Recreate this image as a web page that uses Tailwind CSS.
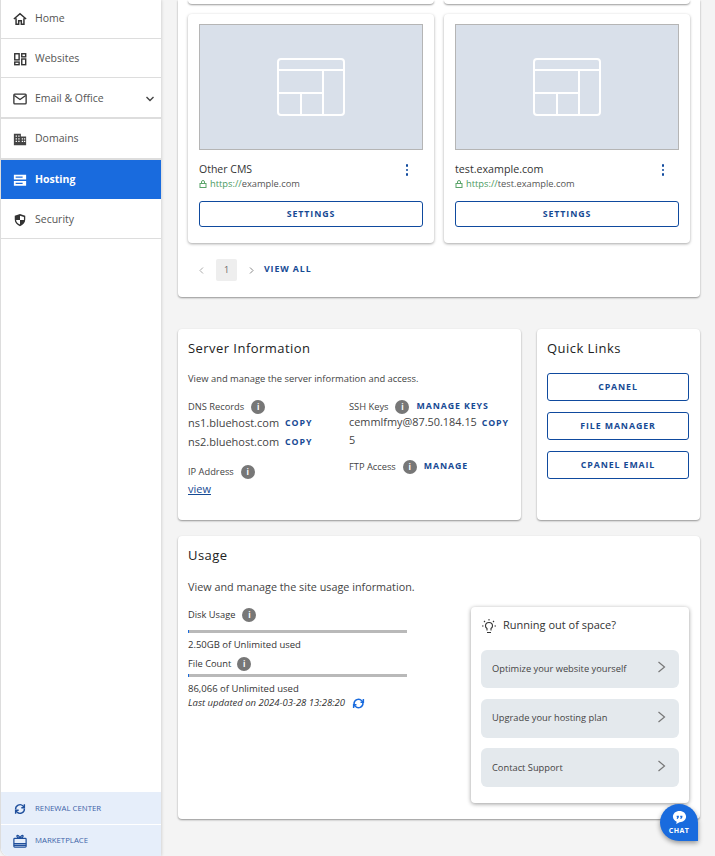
<!DOCTYPE html>
<html lang="en">

<head>
    <meta charset="UTF-8">
    <meta name="viewport" content="width=device-width, initial-scale=1.0">
    <title>Hosting</title>
    <script src="https://cdn.jsdelivr.net/npm/@tailwindcss/browser@4"></script>
</head>

<body class="bg-[#f4f4f4] font-['Open_Sans',sans-serif] text-[#333]">
    <div class="relative flex h-[856px] w-[715px] overflow-hidden">
        <!-- sidebar -->
        <aside class="flex h-full w-[161px] shrink-0 flex-col rounded-bl-lg border-l border-[#ddd] bg-white shadow-[1px_0_3px_rgba(0,0,0,0.12)]">
            <nav class="flex flex-col text-[10.500px] text-[#555]">
                <a class="flex h-[39px] items-center gap-2 border-b border-[#ddd] pl-3">
                    <svg class="size-[14px]" viewBox="0 0 16 16" fill="none" stroke="#333" stroke-width="1.700"><path d="M1 8l7-6 7 6M3.500 7v7h3v-4h3v4h3V7"/></svg>
                    <span>Home</span>
                </a>
                <a class="flex h-[39px] items-center gap-2 border-b border-[#ddd] pt-[2px] pl-3">
                    <svg class="size-[14px]" viewBox="0 0 16 16" fill="none" stroke="#333" stroke-width="1.600"><rect x="2" y="2" width="5" height="7"/><rect x="10" y="2" width="4.500" height="3.500"/><rect x="2" y="11.500" width="5" height="3"/><rect x="10" y="8" width="4.500" height="6.500"/></svg>
                    <span>Websites</span>
                </a>
                <a class="flex h-[41px] items-center gap-2 border-b-2 border-[#ddd] pt-[2px] pl-3">
                    <svg class="size-[14px]" viewBox="0 0 16 16" fill="none" stroke="#333" stroke-width="1.500"><rect x="1" y="2.500" width="14" height="11" rx="1"/><path d="M1.500 4l6.500 4.500L14.500 4"/></svg>
                    <span>Email &amp; Office</span>
                    <svg class="ml-auto mr-[6px] size-[10px]" viewBox="0 0 10 10" fill="none" stroke="#444" stroke-width="1.400"><path d="M1.500 3l3.500 3.500L8.500 3"/></svg>
                </a>
                <a class="flex h-[41px] items-center gap-2 border-b-2 border-[#ddd] pl-3">
                    <svg class="size-[14px]" viewBox="0 0 16 16"><path fill="#444" d="M1 2h8v3h6v10H1z"/><path fill="#fff" d="M3 4h1.500v1.500H3zM6 4h1.500v1.500H6zM3 7h1.500v1.500H3zM6 7h1.500v1.500H6zM3 10h1.500v1.500H3zM6 10h1.500v1.500H6zM10 7h1.500v1.500H10zM12.500 7H14v1.500h-1.500zM10 10h1.500v1.500H10zM12.500 10H14v1.500h-1.500z"/></svg>
                    <span>Domains</span>
                </a>
                <a class="flex h-[39px] items-center gap-2 bg-[#196bde] pl-3 font-bold text-white">
                    <svg class="size-[14px]" viewBox="0 0 16 16"><path fill="#fff" fill-rule="evenodd" d="M1 2h14v5.500H1zM1 9h14v5.500H1zM3 4v1.500h8V4zM3 11v1.500h8V11z"/></svg>
                    <span>Hosting</span>
                </a>
                <a class="flex h-[40px] items-center gap-2 border-b border-[#ddd] pt-[2px] pl-3">
                    <svg class="size-[14px]" viewBox="0 0 16 16"><path fill="#333" fill-rule="evenodd" d="M8 1l6 2.200v4.300c0 3.500-2.500 6.200-6 7.500-3.500-1.300-6-4-6-7.500V3.200zM8 3v5H3.500c.3 2.500 2 4.200 4.500 5.200V8h4.500V4.500z"/></svg>
                    <span>Security</span>
                </a>
            </nav>
            <div class="mt-auto flex flex-col text-[7.800px] text-[#3d63a8]">
                <a class="flex h-[33px] items-center gap-2 border-b border-white bg-[#e6eefa] pt-[2px] pl-3">
                    <svg class="size-[14px]" viewBox="0 0 16 16" fill="none" stroke="#1f4f9c" stroke-width="1.600"><path d="M3 8.500a5 5 0 0 1 8.500-4L13 6M13 7.500a5 5 0 0 1-8.500 4L3 10"/><path d="M13 2.500V6.500H9.500M3 13.500V9.500h3.500"/></svg>
                    <span>RENEWAL CENTER</span>
                </a>
                <a class="flex h-[31px] items-center gap-2 rounded-bl-lg bg-[#e6eefa] pl-3">
                    <svg class="size-[14px]" viewBox="0 0 16 16" fill="none" stroke="#1f4f9c" stroke-width="1.400"><rect x="1" y="5" width="14" height="10" rx="1"/><path d="M1 11h14M1 13h14M8 5C6 4.500 4 3.500 4.500 2S7.500 2.500 8 5c.5-2.500 3-4.500 3.500-3S10 4.500 8 5z"/></svg>
                    <span>MARKETPLACE</span>
                </a>
            </div>
        </aside>

        <!-- content -->
        <main class="flex min-w-0 flex-1 flex-col pl-[17px] pr-[15px]">
            <section class="h-[297px] rounded-b bg-white px-[10px] shadow-[0_1px_2px_rgba(0,0,0,0.4)]">
                <div class="grid grid-cols-2 gap-x-[10px]">
                    <div class="h-[4px] rounded-b bg-white shadow-[0_1px_2px_rgba(0,0,0,0.4)]"></div>
                    <div class="h-[4px] rounded-b bg-white shadow-[0_1px_2px_rgba(0,0,0,0.4)]"></div>
                </div>
                <div class="mt-[10px] grid grid-cols-2 gap-x-[10px]">
                    <div class="h-[229px] rounded bg-white px-[11px] pt-[10px] shadow-[0_1px_3px_rgba(0,0,0,0.35)]">
                        <div class="flex h-[126px] items-center justify-center border border-[#b5b5b5] bg-[#d9e0ea]">
                            <svg class="h-[58px] w-[68px]" viewBox="0 0 68 58" fill="none" stroke="#fff" stroke-width="2"><rect x="1" y="1" width="66" height="56" rx="3"/><path d="M1 12h66M46 12v45M1 35h45M24 35v22"/></svg>
                        </div>
                        <div class="mt-[12px] flex items-start justify-between">
                            <div>
                                <div class="text-[10.500px] leading-[15px] text-[#333]">Other CMS</div>
                                <div class="flex items-center gap-[3px] text-[9.300px] leading-[14px] text-[#555]">
                                    <svg class="size-[8px]" viewBox="0 0 8 8" fill="none" stroke="#5aa469"><rect x="1" y="3.500" width="6" height="4"/><path d="M2.500 3.500V2a1.500 1.500 0 0 1 3 0v1.500"/></svg>
                                    <span><span class="text-[#4a9a5f]">https://</span>example.com</span>
                                </div>
                            </div>
                            <div class="mr-[15px] mt-[2px] flex flex-col gap-[2px]">
                                <i class="size-[2.500px] rounded-full bg-[#0f4a9e]"></i><i class="size-[2.500px] rounded-full bg-[#0f4a9e]"></i><i class="size-[2.500px] rounded-full bg-[#0f4a9e]"></i>
                            </div>
                        </div>
                        <button class="mt-[10px] h-[26px] w-full rounded-[3px] border border-[#0f4a9e] pt-px text-[8.800px] font-bold tracking-[0.900px] text-[#164a94]">SETTINGS</button>
                    </div>
                    <div class="h-[229px] rounded bg-white px-[11px] pt-[10px] shadow-[0_1px_3px_rgba(0,0,0,0.35)]">
                        <div class="flex h-[126px] items-center justify-center border border-[#b5b5b5] bg-[#d9e0ea]">
                            <svg class="h-[58px] w-[68px]" viewBox="0 0 68 58" fill="none" stroke="#fff" stroke-width="2"><rect x="1" y="1" width="66" height="56" rx="3"/><path d="M1 12h66M46 12v45M1 35h45M24 35v22"/></svg>
                        </div>
                        <div class="mt-[12px] flex items-start justify-between">
                            <div>
                                <div class="text-[10.700px] leading-[15px] text-[#333]">test.example.com</div>
                                <div class="flex items-center gap-[3px] text-[9.300px] leading-[14px] text-[#555]">
                                    <svg class="size-[8px]" viewBox="0 0 8 8" fill="none" stroke="#5aa469"><rect x="1" y="3.500" width="6" height="4"/><path d="M2.500 3.500V2a1.500 1.500 0 0 1 3 0v1.500"/></svg>
                                    <span><span class="text-[#4a9a5f]">https://</span>test.example.com</span>
                                </div>
                            </div>
                            <div class="mr-[15px] mt-[2px] flex flex-col gap-[2px]">
                                <i class="size-[2.500px] rounded-full bg-[#0f4a9e]"></i><i class="size-[2.500px] rounded-full bg-[#0f4a9e]"></i><i class="size-[2.500px] rounded-full bg-[#0f4a9e]"></i>
                            </div>
                        </div>
                        <button class="mt-[10px] h-[26px] w-full rounded-[3px] border border-[#0f4a9e] pt-px text-[8.800px] font-bold tracking-[0.900px] text-[#164a94]">SETTINGS</button>
                    </div>
                </div>
                <div class="mt-[16px] flex h-[22px] items-center pl-[10px]">
                    <svg class="size-[7px]" viewBox="0 0 7 7" fill="none" stroke="#aaa"><path d="M5 .5L2 3.500l3 3"/></svg>
                    <span class="ml-[11px] flex h-[22px] w-[21px] items-center justify-center rounded-[2px] bg-[#eee] text-[9px] text-[#666]">1</span>
                    <svg class="ml-[11px] size-[7px]" viewBox="0 0 7 7" fill="none" stroke="#888"><path d="M2 .5l3 3-3 3"/></svg>
                    <span class="ml-[9px] text-[8.800px] font-bold tracking-[0.900px] text-[#164a94]">VIEW ALL</span>
                </div>
            </section>

            <div class="mt-[32px] flex h-[191px] gap-4">
                <section class="w-[343px] rounded bg-white px-[10px] pt-[10px] shadow-[0_1px_2px_rgba(0,0,0,0.4)]">
                    <h2 class="text-[13px] leading-[18px] font-medium tracking-[0.450px] text-[#222]">Server Information</h2>
                    <p class="mt-[15px] whitespace-nowrap text-[9.400px] leading-[13px] text-[#444]">View and manage the server information and access.</p>
                    <div class="mt-[14px] grid grid-cols-[161px_1fr]">
                        <div>
                            <div class="flex h-[16px] items-center gap-[7px] text-[9.300px] text-[#444]">DNS Records <i class="flex size-[14px] items-center justify-center rounded-full bg-[#777] text-[8px] font-bold not-italic text-white">i</i></div>
                            <div class="-mt-px flex h-[19px] items-center gap-[6px] text-[11px] text-[#444]">ns1.bluehost.com <b class="text-[8.800px] font-bold tracking-[0.900px] text-[#164a94]">COPY</b></div>
                            <div class="flex h-[19px] items-center gap-[6px] text-[11px] text-[#444]">ns2.bluehost.com <b class="text-[8.800px] font-bold tracking-[0.900px] text-[#164a94]">COPY</b></div>
                            <div class="mt-[12px] flex h-[16px] items-center gap-[7px] text-[9.300px] text-[#444]">IP Address <i class="flex size-[14px] items-center justify-center rounded-full bg-[#777] text-[8px] font-bold not-italic text-white">i</i></div>
                            <a class="block text-[11px] leading-[18px] text-[#164a94] underline">view</a>
                        </div>
                        <div>
                            <div class="flex h-[16px] items-center gap-[7px] text-[9.300px] text-[#444]">SSH Keys <i class="flex size-[14px] items-center justify-center rounded-full bg-[#777] text-[8px] font-bold not-italic text-white">i</i><b class="text-[8.800px] font-bold tracking-[0.900px] text-[#164a94]">MANAGE KEYS</b></div>
                            <div class="-mt-px text-[10.900px] leading-[15.500px] text-[#444]">cemmlfmy@87.50.184.15 <b class="ml-[2px] text-[8.800px] font-bold tracking-[0.900px] text-[#164a94]">COPY</b><br>5</div>
                            <div class="mt-[12px] flex h-[16px] items-center gap-[7px] text-[9.300px] text-[#444]">FTP Access <i class="flex size-[14px] items-center justify-center rounded-full bg-[#777] text-[8px] font-bold not-italic text-white">i</i><b class="text-[8.800px] font-bold tracking-[0.900px] text-[#164a94]">MANAGE</b></div>
                        </div>
                    </div>
                </section>
                <section class="flex-1 rounded bg-white pl-[10px] pr-[11px] pt-[10px] shadow-[0_1px_2px_rgba(0,0,0,0.4)]">
                    <h2 class="text-[13px] leading-[18px] font-medium tracking-[0.450px] text-[#222]">Quick Links</h2>
                    <div class="mt-[16px] flex flex-col gap-[11px]">
                        <button class="h-[28px] rounded-[3px] border border-[#0f4a9e] pt-px text-[8.800px] font-bold tracking-[0.900px] text-[#164a94]">CPANEL</button>
                        <button class="h-[28px] rounded-[3px] border border-[#0f4a9e] pt-px text-[8.800px] font-bold tracking-[0.900px] text-[#164a94]">FILE MANAGER</button>
                        <button class="h-[28px] rounded-[3px] border border-[#0f4a9e] pt-px text-[8.800px] font-bold tracking-[0.900px] text-[#164a94]">CPANEL EMAIL</button>
                    </div>
                </section>
            </div>

            <section class="mt-[16px] flex h-[283px] justify-between rounded bg-white pl-[10px] pr-[11px] shadow-[0_1px_2px_rgba(0,0,0,0.4)]">
                <div class="w-[219px] pt-[10px]">
                    <h2 class="text-[13px] leading-[18px] font-medium tracking-[0.450px] text-[#222]">Usage</h2>
                    <p class="mt-[15px] whitespace-nowrap text-[10.800px] leading-[16px] text-[#444]">View and manage the site usage information.</p>
                    <div class="mt-[12px] flex h-[16px] items-center gap-[7px] text-[9.300px] text-[#333]">Disk Usage <i class="flex size-[14px] items-center justify-center rounded-full bg-[#777] text-[8px] font-bold not-italic text-white">i</i></div>
                    <div class="mt-[7px] h-[3px] bg-[#b9b9b9]"><div class="h-full w-px bg-[#196bde]"></div></div>
                    <div class="mt-[5px] whitespace-nowrap text-[9.500px] leading-[13px] text-[#333]">2.50GB of Unlimited used</div>
                    <div class="mt-[5px] flex h-[16px] items-center gap-[6px] text-[9.300px] text-[#333]">File Count <i class="flex size-[14px] items-center justify-center rounded-full bg-[#777] text-[8px] font-bold not-italic text-white">i</i></div>
                    <div class="mt-[2px] h-[3px] bg-[#b9b9b9]"><div class="h-full w-px bg-[#196bde]"></div></div>
                    <div class="mt-[5px] whitespace-nowrap text-[9.500px] leading-[13px] text-[#333]">86,066 of Unlimited used</div>
                    <div class="mt-[1px] flex items-center gap-[7px] whitespace-nowrap text-[9.500px] leading-[14px] text-[#333] italic">Last updated on 2024-03-28 13:28:20
                        <svg class="size-[13px]" viewBox="0 0 16 16" fill="none" stroke="#196bde" stroke-width="1.800"><path d="M2.500 8.500A5.500 5.500 0 0 1 12 4.500l1.500 1.500M13.500 7.500A5.500 5.500 0 0 1 4 11.500L2.500 10"/><path d="M14 2.500V6.500H10.500M2 13.500V9.500h3.500"/></svg>
                    </div>
                </div>
                <aside class="mt-[71px] h-[196px] w-[218px] rounded bg-white px-[10px] shadow-[0_1px_4px_rgba(0,0,0,0.4)]">
                    <div class="mb-[6px] flex h-[37px] items-center gap-[6px] text-[11px] text-[#333]">
                        <svg class="size-[16px]" viewBox="0 0 16 16" fill="none" stroke="#333" stroke-width="1.100"><path d="M6 12.500V10.500C4.800 9.700 4.500 8.700 4.500 8a3.500 3.500 0 0 1 7 0c0 .7-.3 1.700-1.500 2.500v2M6 14.500h4M8 1v1.500M1 8h1.500M13.500 8H15M3 3l1 1M13 3l-1 1"/></svg>
                        <span>Running out of space?</span>
                    </div>
                    <a class="flex h-[38px] items-center justify-between rounded-md bg-[#e4e9ed] pl-[11px] pr-[12px] text-[9.300px] font-medium text-[#444]">Optimize your website yourself
                        <svg class="mb-[4px] size-[12px]" viewBox="0 0 12 12" fill="none" stroke="#777" stroke-width="1.200"><path d="M3.500 1l6 5-6 5"/></svg>
                    </a>
                    <a class="mt-[11px] flex h-[39px] items-center justify-between rounded-md bg-[#e4e9ed] pb-[2px] pl-[11px] pr-[12px] text-[9.300px] font-medium text-[#444]">Upgrade your hosting plan
                        <svg class="mb-[2px] size-[12px]" viewBox="0 0 12 12" fill="none" stroke="#777" stroke-width="1.200"><path d="M3.500 1l6 5-6 5"/></svg>
                    </a>
                    <a class="mt-[10px] flex h-[39px] items-center justify-between rounded-md bg-[#e4e9ed] pl-[11px] pr-[12px] text-[9.300px] font-medium text-[#444]">Contact Support
                        <svg class="mb-[4px] size-[12px]" viewBox="0 0 12 12" fill="none" stroke="#777" stroke-width="1.200"><path d="M3.500 1l6 5-6 5"/></svg>
                    </a>
                </aside>
            </section>
        </main>

        <!-- chat bubble -->
        <button class="absolute left-[660px] top-[804px] flex h-[37px] w-[38px] flex-col items-center justify-center rounded-[50%_50%_0_50%] bg-[#196bde] text-[7px] leading-[8px] font-bold tracking-[0.400px] text-white shadow-[0_2px_5px_rgba(0,0,0,0.4)]">
            <svg class="mb-[2px] size-[15px]" viewBox="0 0 16 16"><path fill="#fff" d="M8 1c4 0 7 2.600 7 6s-3 6-7 6l-3.500 2 .5-2.600C2.500 11.500 1 9.500 1 7c0-3.400 3-6 7-6z"/><path fill="#196bde" d="M5 6h2.300v1.800L6 9.500H5l.6-1.700H5zM8.800 6h2.300v1.800L9.800 9.500h-1l.6-1.700h-.6z"/></svg>
            CHAT
        </button>
    </div>
</body>

</html>
